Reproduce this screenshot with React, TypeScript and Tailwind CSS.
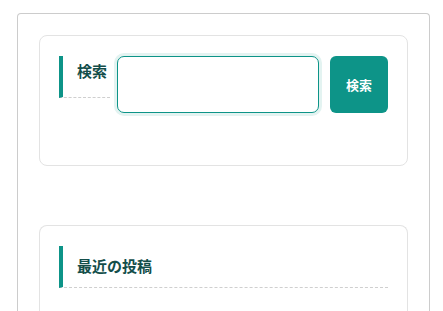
export default function App() {
  return (
    <div
      className="h-screen overflow-hidden bg-white pl-[17px] pr-[13px] pt-[13px]"
      style={{ fontFamily: '"Noto Sans CJK JP", "Noto Sans", sans-serif' }}
    >
      <div className="h-[298px] overflow-hidden rounded-t-[4px] border border-b-0 border-[#cccccc] px-[21px] pt-[21px]">
        {/* search widget */}
        <section className="rounded-[8px] border border-[#e3e3e3] px-[19px] pt-[20px] pb-[52px]">
          <div className="flex items-start">
            <h2 className="h-[42px] w-[51px] shrink-0 border-l-4 border-[#0d9488] pl-[14px] pt-[4px] text-[15px] font-bold leading-[22px] text-[#134e4a] [border-bottom:1px_dashed_#cfcfcf]">
              検索
            </h2>
            <input
              type="text"
              className="ml-[7px] h-[57px] min-w-0 flex-1 rounded-[7px] border border-[#0d9488] bg-white px-3 outline-none shadow-[0_0_0_3px_#e3f3f1]"
            />
            <button className="ml-[11px] h-[57px] w-[58px] shrink-0 rounded-[6px] bg-[#0d9488] text-[13px] font-bold text-white">
              検索
            </button>
          </div>
        </section>

        {/* recent posts widget */}
        <section className="mt-[59px] rounded-t-[8px] border border-b-0 border-[#e3e3e3] px-[19px] pt-[20px] pb-[40px]">
          <h2 className="flex h-[42px] items-center border-l-4 border-[#0d9488] pl-[14px] text-[15px] font-bold text-[#134e4a] [border-bottom:1px_dashed_#cfcfcf]">
            最近の投稿
          </h2>
        </section>
      </div>
    </div>
  );
}
